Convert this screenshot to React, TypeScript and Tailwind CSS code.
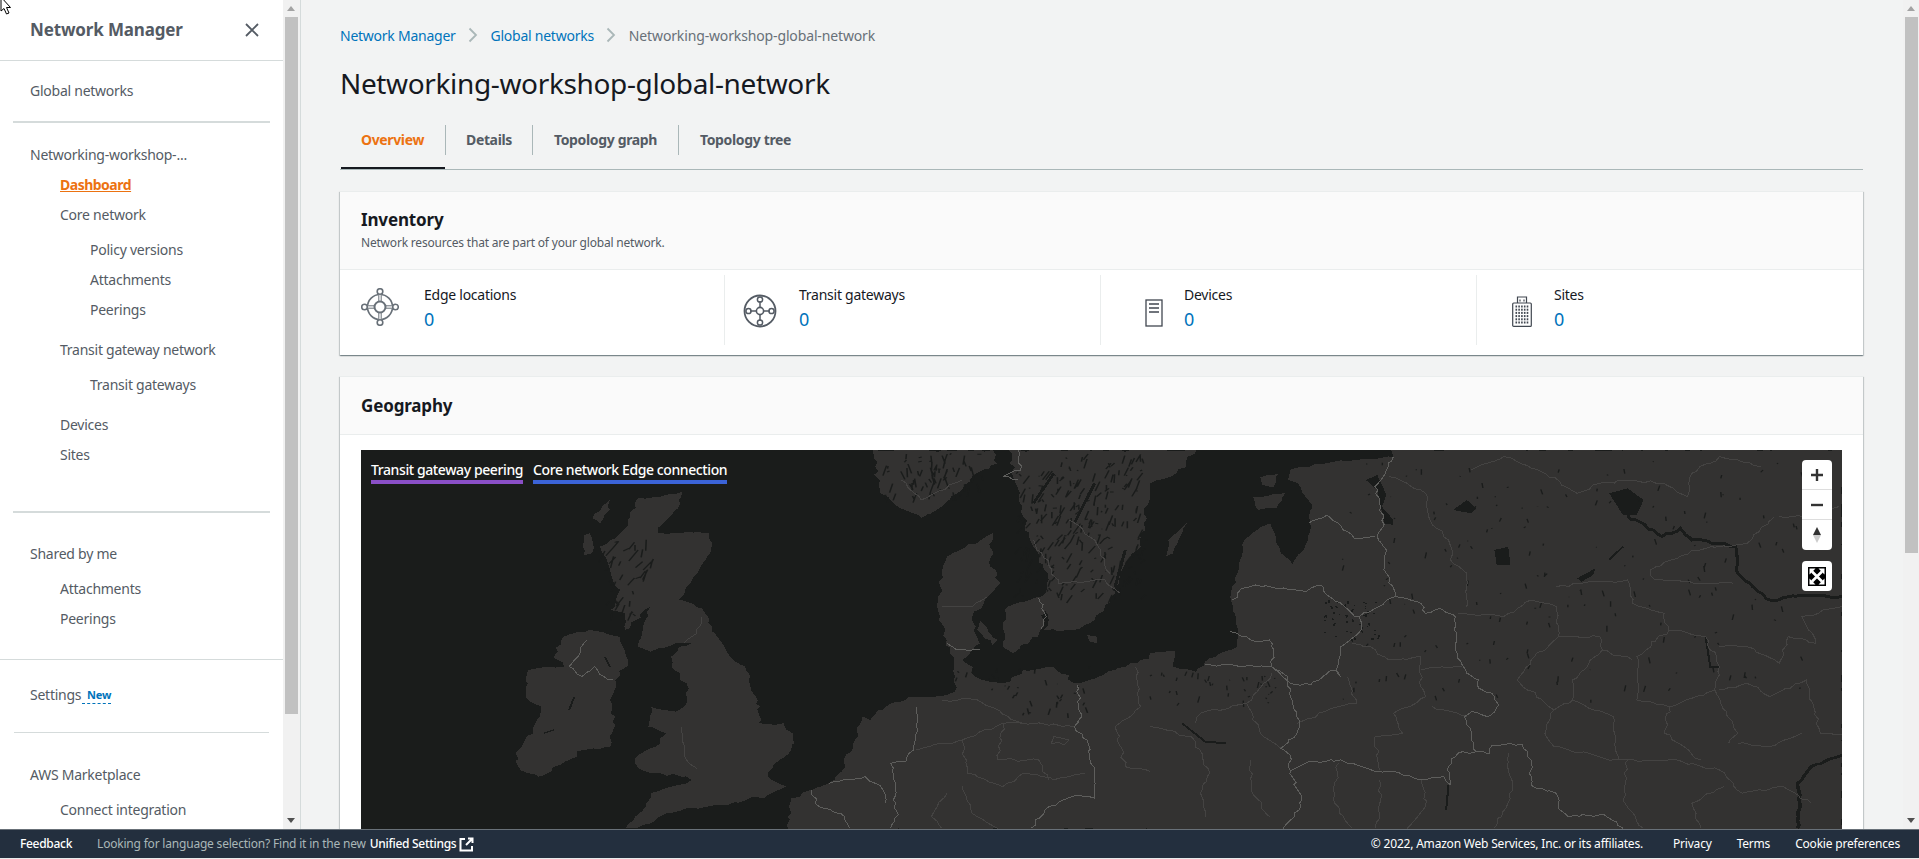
const WEST = 'translate(360 440) scale(0.5102 0.3333)';
const EAST = 'translate(1150 440) scale(0.4592 0.3333)';
const LAND = '#333231';
const WATER = '#1a1c1b';

// small seeded generator, map drawing only
function rng(seed: number) {
  let s = seed;
  return () => {
    s = (s * 16807) % 2147483647;
    return s / 2147483647;
  };
}

function speckles(count: number, seed: number, x0: number, y0: number, w: number, h: number, maxLen: number, lean = 0) {
  const next = rng(seed);
  const out: string[] = [];
  for (let i = 0; i < count; i++) {
    const x = x0 + next() * w;
    const y = y0 + next() * h;
    const dy = next() * maxLen;
    const dx = (next() - 0.5) * maxLen * 0.5 - lean * dy;
    out.push(`M${x.toFixed(0)} ${y.toFixed(0)}L${(x + dx).toFixed(0)} ${(y + dy).toFixed(0)}`);
  }
  return out.join('');
}

// break each straight stretch into short wobbling steps
function wobble(pts: number[][], amp: number, step: number, seed: number) {
  const next = rng(seed);
  const out: string[] = [];
  for (let i = 0; i < pts.length - 1; i++) {
    const [x1, y1] = pts[i];
    const [x2, y2] = pts[i + 1];
    const n = Math.max(1, Math.round(Math.hypot(x2 - x1, y2 - y1) / step));
    for (let k = 0; k < n; k++) {
      const t = k / n;
      const j = k === 0 ? 0 : amp;
      out.push(`${(x1 + (x2 - x1) * t + (next() - 0.5) * j).toFixed(1)},${(y1 + (y2 - y1) * t + (next() - 0.5) * j).toFixed(1)}`);
    }
  }
  const last = pts[pts.length - 1];
  out.push(`${last[0]},${last[1]}`);
  return out.join(' ');
}

const parsePoly = (p: string) => {
  const pts = p.split(' ').map((v) => v.split(',').map(Number));
  return [...pts, pts[0]];
};
const parsePath = (d: string) =>
  d
    .slice(1)
    .split('L')
    .map((v) => v.split(' ').map(Number));

const westLand = [
  // great britain
  '545,175 632,155 628,190 600,240 585,278 685,280 690,310 665,390 640,440 625,478 640,485 670,505 690,560 705,600 725,650 755,680 765,740 785,800 780,850 830,850 848,880 845,930 810,975 800,1010 835,1040 800,1065 720,1095 640,1105 600,1120 570,1150 530,1165 520,1165 560,1100 570,1060 610,1040 650,1020 640,1010 590,1000 545,985 540,955 580,920 600,880 565,860 570,800 620,815 640,790 640,730 615,690 610,650 625,620 650,610 635,610 570,635 545,620 555,560 570,500 520,570 520,520 490,510 510,450 490,390 470,320 490,300 510,280 530,230',
  // ireland
  '400,590 450,570 510,590 525,660 500,720 490,780 500,830 490,920 440,930 350,1010 310,980 310,930 340,880 355,800 325,770 330,690 400,680 380,650',
  // hebrides
  '490,180 455,235 470,250 490,210',
  '440,285 450,280 455,340 440,345',
  // norway
  '1005,30 1240,30 1250,70 1200,110 1180,150 1130,210 1100,235 1060,205 1020,160 1010,80',
  // sweden
  '1272,30 1640,30 1600,100 1548,130 1530,320 1490,400 1480,460 1440,540 1400,570 1340,570 1350,540 1335,470 1350,420 1320,320 1300,230 1285,130',
  // jutland and islands
  '1240,280 1210,310 1150,350 1140,400 1135,540 1150,600 1165,680 1170,745 1220,720 1180,660 1215,610 1200,530 1230,470 1255,430 1235,380',
  '1270,500 1340,470 1340,560 1310,610 1280,640 1260,620',
  '1215,540 1250,600 1240,615 1210,570',
  '1425,585 1445,590 1445,610 1430,605',
  // netherlands, germany, france
  '840,1170 845,1075 885,1050 930,1020 950,975 975,880 985,830 1000,840 1015,810 1090,770 1150,765 1170,740 1220,720 1260,730 1300,690 1360,680 1400,730 1430,720 1500,680 1568,635 1568,1170',
];

const eastLand = [
  '0,640 55,632 50,680 100,695 120,665 190,620 190,560 175,470 190,400 205,300 240,262 262,250 285,340 310,372 345,300 352,192 322,130 300,120 305,90 400,65 530,50 525,30 1507,30 1507,1170 0,1170',
  '225,172 295,160 275,205 235,210',
  '240,112 280,100 270,140 245,135',
  '80,250 40,300 35,350 50,340 70,280',
];

const eastLakes = [
  '470,120 495,105 515,165 505,200 530,240 530,255 510,250 495,150',
  '1000,160 1040,145 1075,180 1060,225 1030,225',
  '660,210 690,180 710,205 700,220',
  '750,330 780,320 785,375 755,375',
  '930,415 970,385 965,405 940,425',
];

const westBorders = [
  'M445 600L420 660L410 680L435 710L460 680L485 720L495 718',
  'M1150 610L1170 630L1215 630',
  'M1405 735L1415 830L1400 860L1425 900L1440 1020L1440 1075L1405 1065L1350 1100L1315 1165',
  'M1090 800L1090 880L1085 930L1070 965L1040 970L1050 1030L1045 1080L1055 1125L1040 1165',
  'M920 1030L990 1010L1025 1050L1030 1090',
  'M885 1050L900 1100L950 1130L960 1165',
  'M1290 30L1295 90L1260 110L1290 120',
  'M1330 475L1345 530L1335 565',
];

const westFaint = [
  'M670 530L660 580L635 610',
  'M630 860L640 960L660 985',
  'M1090 930L1180 900L1190 1000L1260 1040L1300 1000L1360 1020L1420 1000',
  'M1260 850L1250 960L1330 960L1350 1020',
  'M1180 900L1260 850L1320 850L1400 860',
  'M1140 780L1210 780L1270 830L1300 850',
  'M1360 890L1390 900L1380 915L1355 910L1360 890',
  'M1520 680L1530 800L1480 860L1500 980L1568 1000',
  'M1150 1060L1120 1130L1140 1165',
  'M1180 1040L1200 1120L1250 1165',
  'M1320 300L1370 430L1460 420L1490 460',
  'M1390 240L1440 300L1470 400',
  'M1060 120L1100 180L1180 120',
  'M1140 500L1200 500L1230 470',
];

const eastBorders = [
  'M530 50L515 90L490 140L510 255L495 290L515 330L510 380L535 470L455 530L460 570L415 620L405 690L415 710L400 690L350 735L305 730L265 680L120 675',
  'M345 250L385 225L445 295L490 290',
  'M180 480L200 445L230 435L340 455L370 435L385 465L440 520L455 530',
  'M175 575L230 605L260 600L270 630L265 680',
  'M265 680L300 710L305 770L325 850L320 880L285 925L305 945L305 990L330 1080L325 1110L290 1165',
  'M535 470L590 490L600 520L630 505L665 530L665 630L690 700L715 720L715 745L745 760L760 795L735 830L700 815L685 830L700 880L710 935L670 940L650 980L655 1035',
  'M305 995L345 965L415 960L490 995L530 995L590 1020L640 1010L655 1035',
  'M710 935L740 940L745 915L810 912L830 960L830 1035L885 1060L890 1105L910 1130L990 1125L1030 1165',
];

const eastFaint = [
  'M520 110L600 160L610 240L650 300L660 370L690 400L690 500',
  'M670 520L770 530L830 480L885 500L890 590L830 660L800 720',
  'M800 720L880 810L860 880L880 920L1010 960L1130 960L1240 990L1290 1060L1380 1040L1440 1090',
  'M885 440L940 430L1040 420L1050 490L1120 520L1130 570L1210 590L1240 680L1230 750',
  'M1130 570L1060 650L1060 780L1130 800L1230 750L1280 880L1260 910',
  'M890 590L980 590L985 630L1050 660',
  'M985 630L920 720L920 780L880 810',
  'M920 780L1010 830L1020 960',
  'M1130 800L1120 880L1200 960',
  'M1240 620L1300 620L1370 670L1390 590L1450 610L1420 530L1507 500',
  'M1240 750L1300 730L1350 770L1430 720L1460 880L1507 885',
  'M1280 910L1350 920L1420 880',
  'M440 610L480 620L520 660L590 650L590 740L600 770L530 820L550 880L490 890L500 990',
  'M590 690L680 680',
  'M430 710L450 790L410 800L320 850',
  'M615 800L690 830',
  'M100 850L110 820L210 790L265 700',
  'M210 790L240 880L285 925',
  'M0 860L90 890L130 1000L110 1060L120 1130',
  'M220 960L220 1050L260 1130',
  'M410 970L400 1080L440 1165',
  'M500 1020L500 1120L490 1165',
  'M590 1020L600 1100L560 1165',
  'M780 940L790 1050L750 1165',
  'M1040 960L1030 1080L1075 1165',
  'M1180 1090L1250 1040',
  'M1180 1090L1200 1165',
  'M700 90L770 50L860 100L930 160L980 130L1050 120L1120 130L1170 170L1180 100L1240 50L1330 80',
  'M1360 230L1300 310L1180 330L1090 390L1100 420L1200 430L1270 430',
  'M1500 200L1420 230L1370 230',
];

function EdgeIcon() {
  return (
    <svg width="38" height="38" viewBox="0 0 38 38" fill="none" stroke="#687078" strokeWidth="1.6">
      <circle cx="19" cy="19" r="12.5" />
      <path d="M19 6v7M19 25v7M6 19h7M25 19h7" stroke="#fff" strokeWidth="3.5" />
      <path d="M17.8 6v7.5M20.2 6v7.5M17.8 24.5V32M20.2 24.5V32M6 17.8h7.5M6 20.2h7.5M24.5 17.8H32M24.5 20.2H32" strokeWidth="1" />
      <circle cx="19" cy="19" r="5.5" strokeWidth="2" />
      <circle cx="19" cy="3.5" r="2.8" fill="#fff" />
      <circle cx="19" cy="34.5" r="2.8" fill="#fff" />
      <circle cx="3.5" cy="19" r="2.8" fill="#fff" />
      <circle cx="34.5" cy="19" r="2.8" fill="#fff" />
    </svg>
  );
}

function GatewayIcon() {
  return (
    <svg width="34" height="34" viewBox="0 0 34 34" fill="none" stroke="#545b64" strokeWidth="1.5">
      <circle cx="17" cy="17" r="15.5" strokeWidth="1.8" />
      <circle cx="17" cy="17" r="3.6" strokeWidth="1.6" />
      <path d="M17 7v6.4M17 20.6V27M7 17h6.4M20.6 17H27" />
      <circle cx="17" cy="5.5" r="2.6" />
      <circle cx="17" cy="28.5" r="2.6" />
      <circle cx="5.5" cy="17" r="2.6" />
      <circle cx="28.5" cy="17" r="2.6" />
    </svg>
  );
}

function DeviceIcon() {
  return (
    <svg width="18" height="28" viewBox="0 0 18 28" fill="none" stroke="#414750" strokeWidth="1.3">
      <rect x="1" y="1" width="16" height="26" />
      <path d="M4 5h10M4 9h10M4 13h10" />
    </svg>
  );
}

function BuildingIcon() {
  const windows = [];
  for (let r = 0; r < 6; r++) {
    for (let c = 0; c < 5; c++) {
      windows.push(<rect key={`${r}-${c}`} x={3.5 + c * 2.8} y={9.5 + r * 3.2} width="1.6" height="2" fill="#414750" />);
    }
  }
  return (
    <svg width="20" height="31" viewBox="0 0 20 31" fill="none" stroke="#414750" strokeWidth="1.2">
      <path d="M5.5 7V1h9v6" />
      <path d="M8 3.5v2M12 3.5v2" />
      <rect x="0.7" y="7" width="18.6" height="23.4" rx="1" />
      <g stroke="none">{windows}</g>
    </svg>
  );
}

function Stat({ label, icon, col, iconBox }: { label: string; icon: React.ReactNode; col: string; iconBox: string }) {
  return (
    <div className={col}>
      <div className={iconBox}>{icon}</div>
      <div>
        <div className="h-[20px] text-[14px] leading-[20px] text-[#16191f]">{label}</div>
        <div className="mt-[1px] text-[18px] leading-[26px] text-[#0073bb]">0</div>
      </div>
    </div>
  );
}

function NavItem({ label, level, className }: { label: string; level: 0 | 1 | 2; className?: string }) {
  const pad = level === 0 ? 'pl-[30px]' : level === 1 ? 'pl-[60px]' : 'pl-[90px]';
  return <div className={`flex h-[30px] items-center pb-[2px] text-[14px] text-[#545b64] ${pad} ${className ?? ''}`}>{label}</div>;
}

function Chevron() {
  return (
    <svg width="10" height="16" viewBox="0 0 10 16" fill="none" stroke="#aab7b8" strokeWidth="1.8" className="mx-[12.5px]">
      <path d="M1.5 1.5L8 8l-6.5 6.5" />
    </svg>
  );
}

function Map() {
  return (
    <svg className="block h-[379px] w-[1481px]" viewBox="361 450 1481 379" shapeRendering="crispEdges">
      <rect x="361" y="450" width="1481" height="379" fill={WATER} />
      <g transform={WEST}>
        {westLand.map((p, i) => (
          <polygon key={p} points={wobble(parsePoly(p), 11, 14, 100 + i)} fill={LAND} />
        ))}
        <path d={speckles(240, 77, 1290, 40, 250, 430, 30, 0.25)} stroke={WATER} strokeWidth="3" fill="none" />
        <path d="M1440 130L1400 250M1500 330L1480 440M1360 100L1320 190" stroke={WATER} strokeWidth="6" fill="none" />
        <path d={speckles(70, 91, 1030, 40, 190, 130, 30)} stroke={WATER} strokeWidth="3" fill="none" />
        <path d={speckles(40, 123, 480, 290, 100, 240, 36, 0.3)} stroke={WATER} strokeWidth="3" fill="none" />
        <path d={speckles(36, 55, 1170, 680, 260, 140, 20)} stroke={WATER} strokeWidth="3" fill="none" />
        <path d="M640 1010L600 1040M480 650L490 680M360 880L380 870M420 770L410 810" stroke={WATER} strokeWidth="4" fill="none" />
        <g fill="none">
          {westFaint.map((d, i) => (
            <polyline key={d} points={wobble(parsePath(d), 9, 14, 300 + i)} stroke="#444342" vectorEffect="non-scaling-stroke" />
          ))}
          {westBorders.map((d, i) => (
            <polyline key={d} points={wobble(parsePath(d), 8, 12, 400 + i)} stroke="#5e5e5c" vectorEffect="non-scaling-stroke" />
          ))}
        </g>
      </g>
      <g transform={EAST}>
        {eastLand.map((p, i) => (
          <polygon key={p} points={wobble(parsePoly(p), 6, 14, 500 + i)} fill={LAND} />
        ))}
        {eastLakes.map((p) => (
          <polygon key={p} points={p} fill={WATER} />
        ))}
        <path d={speckles(170, 201, 420, 60, 1000, 720, 18)} stroke={WATER} strokeWidth="3" fill="none" />
        <path d={speckles(50, 19, 380, 480, 120, 120, 10)} stroke={WATER} strokeWidth="4" fill="none" />
        <path d={speckles(36, 43, 0, 690, 280, 120, 20)} stroke={WATER} strokeWidth="3" fill="none" />
        <g fill="none" stroke={WATER}>
          <polyline points={wobble(parsePath('M1040 225L1115 290L1155 265L1180 300L1250 310L1275 320L1280 400L1320 450L1350 480L1420 465L1507 470'), 8, 12, 61)} strokeWidth="3" vectorEffect="non-scaling-stroke" />
          <polyline points={wobble(parsePath('M1507 945L1440 980L1410 1030L1415 1090L1410 1165'), 8, 12, 62)} strokeWidth="8" />
          <path d="M650 1035L645 1110M70 850L120 905L165 910" strokeWidth="2" vectorEffect="non-scaling-stroke" />
          <path d="M1030 320L1000 360M1210 590L1220 680L1240 680" strokeWidth="2" vectorEffect="non-scaling-stroke" />
        </g>
        <g fill="none">
          {eastFaint.map((d, i) => (
            <polyline key={d} points={wobble(parsePath(d), 9, 14, 700 + i)} stroke="#444342" vectorEffect="non-scaling-stroke" />
          ))}
          {eastBorders.map((d, i) => (
            <polyline key={d} points={wobble(parsePath(d), 8, 12, 800 + i)} stroke="#5e5e5c" vectorEffect="non-scaling-stroke" />
          ))}
        </g>
      </g>
    </svg>
  );
}

export default function App() {
  return (
    <div className="relative flex h-[859px] w-[1919px] flex-col overflow-hidden bg-[#f2f3f3] tracking-[-0.25px] [font-family:'Noto_Sans',sans-serif]">
      <svg className="absolute left-0 top-0 z-10" width="13" height="16" viewBox="0 0 13 16">
        <path d="M1 -3V11L4 8.5L6.5 14L9 13L6.5 7.5H10.5Z" fill="#fff" stroke="#000" strokeWidth="1" />
      </svg>

      <div className="flex h-[829px] min-h-0">
        {/* side nav */}
        <aside className="w-[283px] shrink-0 overflow-hidden bg-white">
          <div className="flex h-[61px] items-center justify-between border-b border-[#d5dbdb] pl-[30px] pr-[24px]">
            <span className="text-[17px] font-bold tracking-[-0.15px] text-[#545b64]">Network Manager</span>
            <svg width="14" height="14" viewBox="0 0 14 14" fill="none" stroke="#545b64" strokeWidth="1.8">
              <path d="M1 1l12 12M13 1L1 13" />
            </svg>
          </div>
          <NavItem label="Global networks" level={0} className="mt-[15px]" />
          <div className="mx-[13px] mt-[15px] h-[2px] bg-[#d5dbdb]" />
          <NavItem label="Networking-workshop-..." level={0} className="mt-[17px]" />
          <div className="flex h-[30px] items-center pb-[2px] pl-[60px] text-[14px] font-bold tracking-[-0.5px] text-[#ec7211] underline">Dashboard</div>
          <NavItem label="Core network" level={1} />
          <NavItem label="Policy versions" level={2} className="mt-[5px]" />
          <NavItem label="Attachments" level={2} />
          <NavItem label="Peerings" level={2} />
          <NavItem label="Transit gateway network" level={1} className="mt-[10px]" />
          <NavItem label="Transit gateways" level={2} className="mt-[5px]" />
          <NavItem label="Devices" level={1} className="mt-[10px]" />
          <NavItem label="Sites" level={1} />
          <div className="mx-[13px] mt-[41px] h-[2px] bg-[#d5dbdb]" />
          <NavItem label="Shared by me" level={0} className="mt-[26px]" />
          <NavItem label="Attachments" level={1} className="mt-[5px]" />
          <NavItem label="Peerings" level={1} />
          <div className="mt-[25px] h-px bg-[#d5dbdb]" />
          <div className="mt-[20px] flex h-[30px] items-center pb-[2px] pl-[30px] text-[14px] text-[#545b64]">
            <span className="w-[52px]">Settings</span>
            <span className="mt-[3px] border-b border-dashed border-[#0073bb] pb-[1px] pl-[5px] text-[11px] font-bold leading-[14px] tracking-[-0.2px] text-[#0073bb]">New</span>
          </div>
          <div className="mx-[14px] mt-[22px] h-px bg-[#d5dbdb]" />
          <NavItem label="AWS Marketplace" level={0} className="mt-[27px]" />
          <NavItem label="Connect integration" level={1} className="mt-[5px]" />
        </aside>

        {/* side nav scrollbar */}
        <div className="flex w-[18px] shrink-0 flex-col items-center border-r border-[#d5dbdb] bg-[#f1f1f1] pr-px">
          <div className="mb-[2px] mt-[6px] h-0 w-0 border-x-[4px] border-b-[5px] border-x-transparent border-b-[#a3a3a3]" />
          <div className="mt-[4px] h-[697px] w-[13px] bg-[#c1c1c1]" />
          <div className="mt-auto mb-[6px] h-0 w-0 border-x-[4px] border-t-[5px] border-x-transparent border-t-[#505050]" />
        </div>

        {/* content */}
        <main className="min-w-0 flex-1 overflow-hidden pl-[39px] pr-[40px] pt-[25px] text-[#16191f]">
          <nav className="flex h-[20px] items-center text-[14px]">
            <span className="text-[#0073bb]">Network Manager</span>
            <Chevron />
            <span className="text-[#0073bb]">Global networks</span>
            <Chevron />
            <span className="tracking-[-0.14px] text-[#687078]">Networking-workshop-global-network</span>
          </nav>
          <h1 className="mt-[18px] h-[40px] text-[28px] font-normal leading-[40px] tracking-[-0.36px] text-[#16191f]">Networking-workshop-global-network</h1>

          <div className="mt-[8px] flex h-[59px] items-center border-b border-[#aab7b8] text-[14px] font-bold tracking-[-0.35px] text-[#545b64]">
            <div className="relative flex h-[30px] w-[106px] items-center justify-center border-r border-[#aab7b8] pb-[2px] text-[#ec7211]">
              Overview
              <div className="absolute bottom-[-14px] left-[1px] right-0 h-[2px] bg-[#16191f]" />
            </div>
            <div className="flex h-[30px] w-[87px] items-center justify-center border-r border-[#aab7b8] pb-[2px]">Details</div>
            <div className="flex h-[30px] w-[146px] items-center justify-center border-r border-[#aab7b8] pb-[2px]">Topology graph</div>
            <div className="flex h-[30px] w-[133px] items-center justify-center pb-[2px]">Topology tree</div>
          </div>

          {/* inventory */}
          <section className="mt-[21px] h-[164px] overflow-hidden bg-white shadow-[0_1px_1px_0_rgba(0,28,36,0.3),1px_1px_1px_0_rgba(0,28,36,0.15),-1px_1px_1px_0_rgba(0,28,36,0.15)]">
            <div className="h-[79px] border-y border-t-[#eaeded] border-b-[#eaeded] bg-[#fafafa] pl-[21px] pr-[20px] pt-[17px]">
              <h2 className="h-[22px] text-[17px] font-bold leading-[22px] tracking-[-0.15px]">Inventory</h2>
              <p className="mt-[4px] text-[12px] leading-[16px] tracking-[-0.2px] text-[#545b64]">Network resources that are part of your global network.</p>
            </div>
            <div className="grid grid-cols-[385px_376px_376px_1fr] pt-[5px]">
              <Stat label="Edge locations" icon={<EdgeIcon />} col="flex h-[70px] border-r border-[#eaeded] pl-[21px] pt-[10px]" iconBox="mr-[25px] mt-[3px]" />
              <Stat label="Transit gateways" icon={<GatewayIcon />} col="flex h-[70px] border-r border-[#eaeded] pl-[18px] pt-[10px]" iconBox="mr-[22px] mt-[9px]" />
              <Stat label="Devices" icon={<DeviceIcon />} col="flex h-[70px] border-r border-[#eaeded] pl-[44px] pt-[10px]" iconBox="mr-[21px] mt-[14px]" />
              <Stat label="Sites" icon={<BuildingIcon />} col="flex h-[70px] pl-[35px] pt-[10px]" iconBox="mr-[22px] mt-[11px]" />
            </div>
          </section>

          {/* geography */}
          <section className="mt-[21px] bg-white shadow-[0_1px_1px_0_rgba(0,28,36,0.3),1px_1px_1px_0_rgba(0,28,36,0.15),-1px_1px_1px_0_rgba(0,28,36,0.15)]">
            <div className="flex h-[59px] items-center border-y border-y-[#eaeded] bg-[#fafafa] pl-[21px] pr-[20px] text-[17px] font-bold tracking-[-0.15px]">Geography</div>
            <div className="pl-[21px] pr-[20px] pt-[15px]">
              <div className="relative h-[379px] overflow-hidden">
                <Map />
                <div className="absolute left-[10px] top-[10px] flex gap-[10px] text-[14px] font-medium leading-[20px] tracking-[-0.4px] text-white">
                  <span className="h-[24px] w-[152px] whitespace-nowrap border-b-4 border-[#8a4fc7]">Transit gateway peering</span>
                  <span className="h-[24px] w-[194px] whitespace-nowrap border-b-4 border-[#3b63d8]">Core network Edge connection</span>
                </div>
                <div className="absolute left-[1441px] top-[10px] w-[30px]">
                  <div className="rounded-[4px] bg-white">
                    <div className="flex h-[30px] items-center justify-center border-b border-[#dddddd]">
                      <svg width="12" height="12" viewBox="0 0 12 12"><path d="M6 0v12M0 6h12" stroke="#333" strokeWidth="2.4" /></svg>
                    </div>
                    <div className="flex h-[30px] items-center justify-center border-b border-[#dddddd]">
                      <svg width="12" height="12" viewBox="0 0 12 12"><path d="M0 6h12" stroke="#333" strokeWidth="2.4" /></svg>
                    </div>
                    <div className="flex h-[30px] flex-col items-center justify-center">
                      <div className="h-0 w-0 border-x-[4px] border-b-[8px] border-x-transparent border-b-[#333]" />
                      <div className="h-0 w-0 border-x-[4px] border-t-[8px] border-x-transparent border-t-[#ccc]" />
                    </div>
                  </div>
                  <div className="mt-[11px] flex h-[30px] items-center justify-center rounded-[4px] bg-white">
                    <svg width="18" height="19" viewBox="0 0 18 19">
                      <rect width="18" height="19" fill="#000" />
                      <path d="M4 4.5L14 14.5M14 4.5L4 14.5" stroke="#fff" strokeWidth="2.6" />
                      <path d="M1.5 1.5h6l-6 6zM16.5 1.5h-6l6 6zM1.5 17.5h6l-6-6zM16.5 17.5h-6l6-6z" fill="#fff" />
                    </svg>
                  </div>
                </div>
              </div>
            </div>
          </section>
        </main>

        {/* page scrollbar */}
        <div className="flex w-[16px] shrink-0 flex-col items-center bg-[#f1f1f1]">
          <div className="mt-[6px] h-0 w-0 border-x-[4px] border-b-[5px] border-x-transparent border-b-[#a3a3a3]" />
          <div className="mt-[6px] h-[536px] w-[13px] bg-[#c1c1c1]" />
          <div className="mb-[6px] mt-auto h-0 w-0 border-x-[4px] border-t-[5px] border-x-transparent border-t-[#505050]" />
        </div>
      </div>

      <footer className="flex h-[29px] items-center justify-between border-t border-[#687078] bg-[#232f3e] pl-[20px] pr-[19px] text-[12px] tracking-[-0.2px] text-[#d5dbdb]">
        <div className="flex items-center">
          <span className="font-medium tracking-[-0.3px] text-white">Feedback</span>
          <span className="ml-[25px] text-[#aab7b8]">Looking for language selection? Find it in the new</span>
          <span className="ml-[4px] font-medium tracking-[-0.3px] text-white">Unified Settings</span>
          <svg className="ml-[3px]" width="15" height="15" viewBox="0 0 15 15" fill="none" stroke="#fff" strokeWidth="2">
            <path d="M6 2H1.5v11.5H13V9M9 1.5h4.5V6M13.5 1.5L7 8" />
          </svg>
        </div>
        <div className="flex items-center">
          <span className="text-white">© 2022, Amazon Web Services, Inc. or its affiliates.</span>
          <span className="ml-[30px] text-white">Privacy</span>
          <span className="ml-[25px] text-white">Terms</span>
          <span className="ml-[25px] text-white">Cookie preferences</span>
        </div>
      </footer>
      <div className="h-px bg-[#e9ebeb]" />
    </div>
  );
}
